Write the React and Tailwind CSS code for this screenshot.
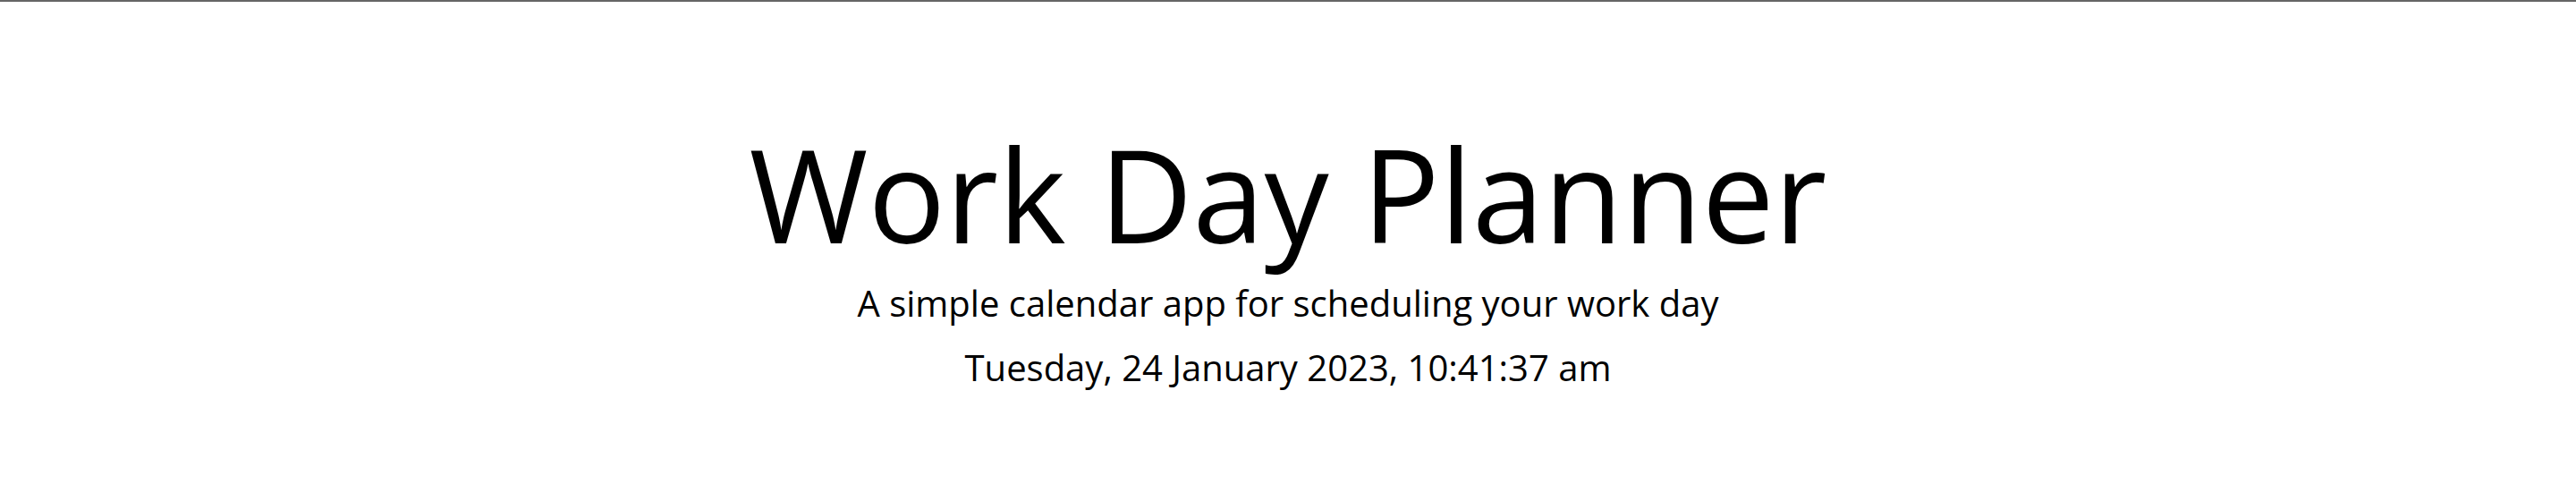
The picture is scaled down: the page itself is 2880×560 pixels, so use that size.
import React from 'react';

export default function App() {
  return (
    <div className="min-h-[560px] bg-white text-black" style={{ fontFamily: '"Open Sans", "Liberation Sans", sans-serif' }}>
      <header className="border-t-2 border-[#666666] pt-[128px] text-center">
        <h1 className="text-[144px] font-normal leading-[1.2]">Work Day Planner</h1>
        <p className="mt-[6px] text-[40px] leading-[1.5]">A simple calendar app for scheduling your work day</p>
        <p className="mt-[12px] text-[40px] leading-[1.5]">Tuesday, 24 January 2023, 10:41:37 am</p>
      </header>
    </div>
  );
}
